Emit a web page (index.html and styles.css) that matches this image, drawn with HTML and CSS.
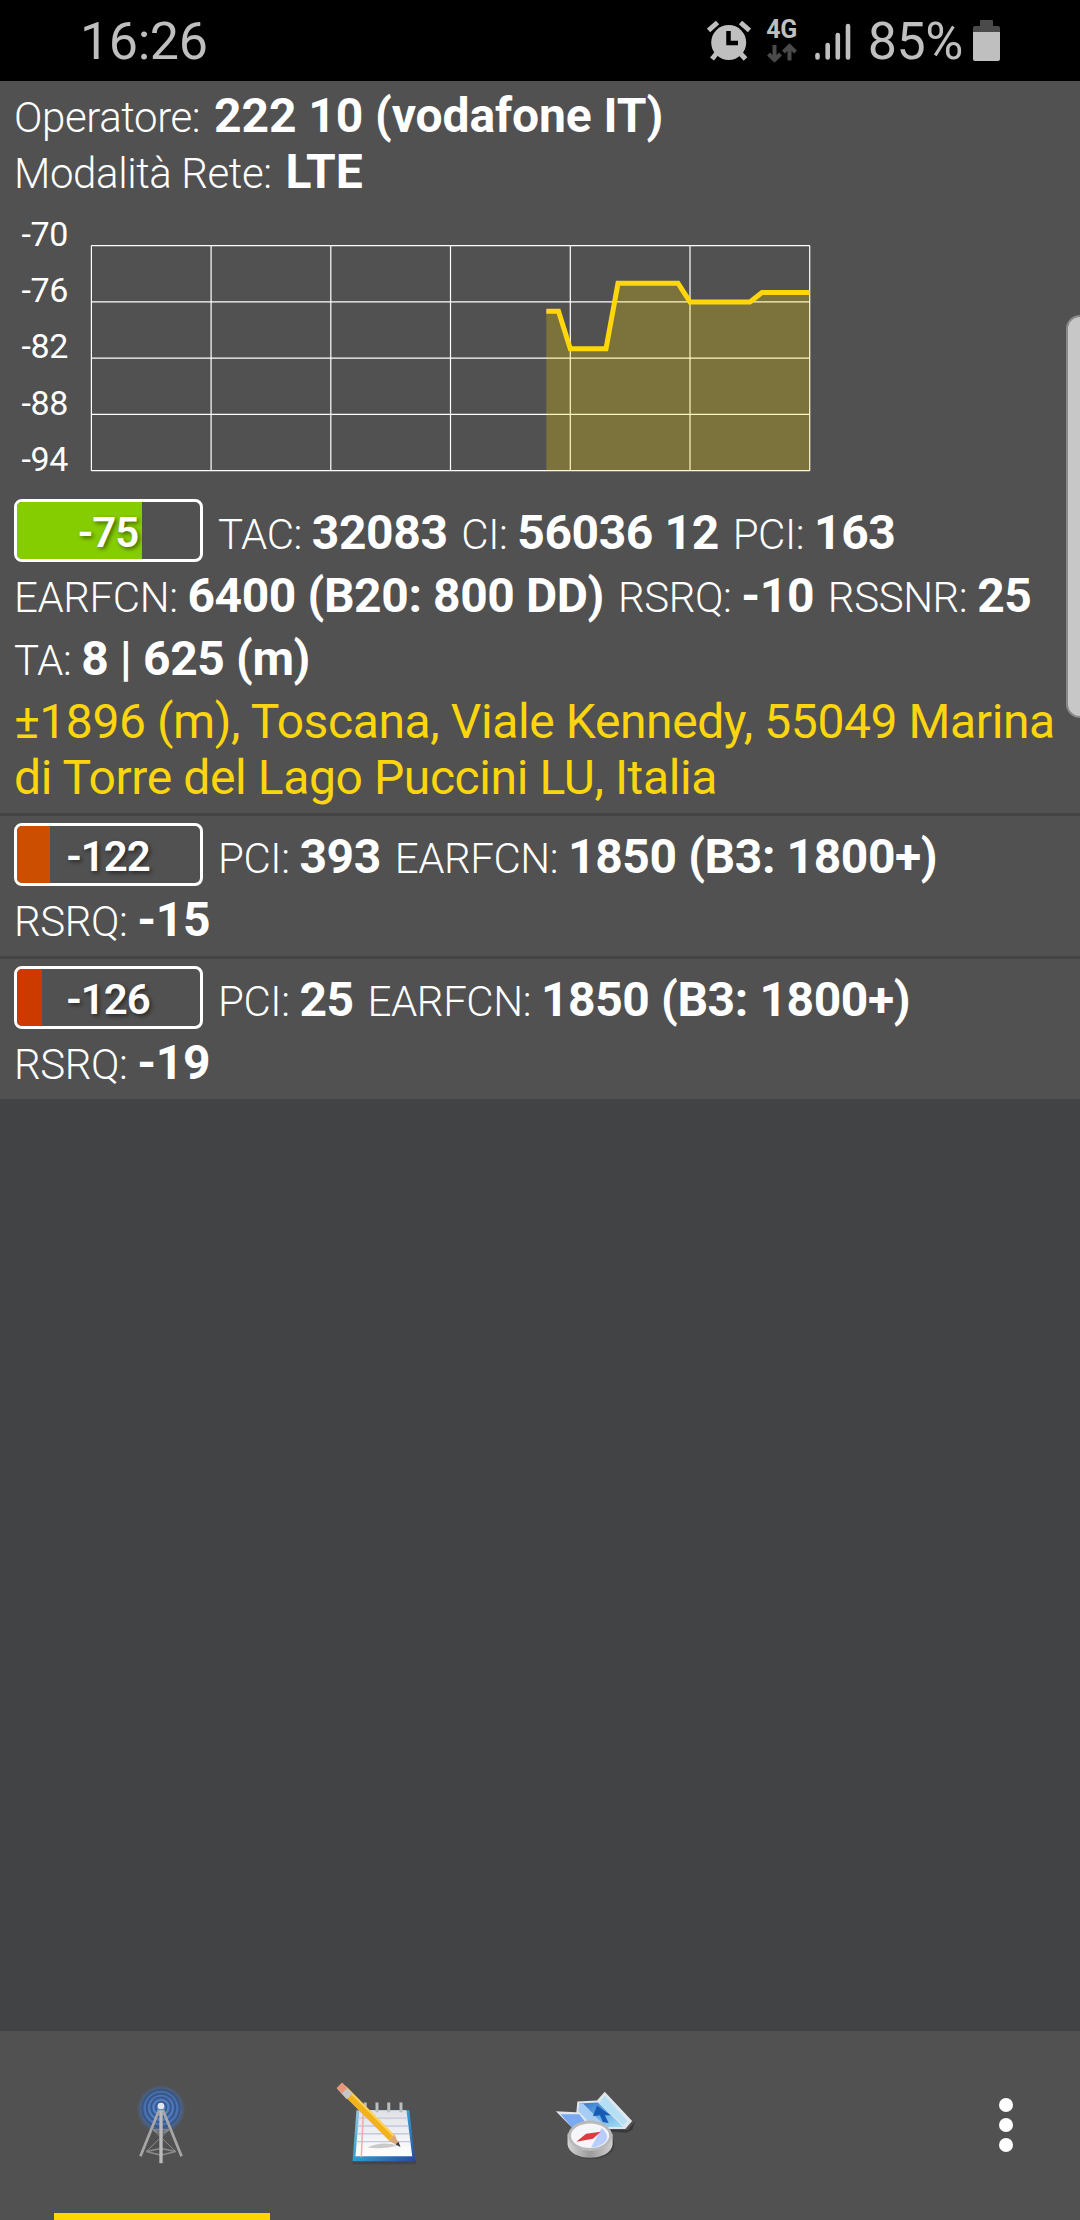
FILE: index.html
```html
<!DOCTYPE html>
<html lang="it">
<head>
  <meta charset="UTF-8">
  <meta name="viewport" content="width=device-width, initial-scale=1.0">
  <title>Informazioni Cella</title>
  <link rel="stylesheet" href="styles.css">
</head>
<body>
  <div class="status-bar">
    <span class="clock">16:26</span>
    <div class="status-icons">
      <svg class="alarm" width="44" height="42" viewBox="0 0 44 42">
        <g stroke="#bfbfbf" stroke-width="5">
          <path d="M1.500 10.500 L10.500 2.500 M33.500 2.500 L42.500 10.500"/>
          <path d="M10 33 L5 39 M33 33 L38.500 39"/>
        </g>
        <circle cx="21.700" cy="22.500" r="17.500" fill="#bfbfbf"/>
        <path d="M21.500 11 V23 H31" fill="none" stroke="#000" stroke-width="4.500"/>
      </svg>
      <div class="network">
        <span>4G</span>
        <svg width="30" height="20" viewBox="0 0 30 20">
          <path d="M7.500 2 V17 M1.500 11 L7.500 17 L13.500 11 M22.500 17.500 V3 M16.500 9 L22.500 3 L28.500 9" fill="none" stroke="#4a4a4a" stroke-width="4"/>
        </svg>
      </div>
      <svg class="bars" width="36" height="39" viewBox="0 0 36 39">
        <path d="M2.500 33 V35.500 M12.700 23 V35.500 M22.800 13 V35.500 M33 4 V35.500" stroke="#bfbfbf" stroke-width="4.600" stroke-linecap="round"/>
      </svg>
      <span class="percent">85%</span>
      <svg class="battery" width="27" height="41" viewBox="0 0 27 41">
        <path d="M0 12 V8 Q0 6 2 6 H7 V1 Q7 0 8 0 H19 Q20 0 20 1 V6 H25 Q27 6 27 8 V12 Z" fill="#4a4a4a"/>
        <path d="M0 12 H27 V39 Q27 41 25 41 H2 Q0 41 0 39 Z" fill="#bfbfbf"/>
      </svg>
    </div>
  </div>

  <div class="cell main-cell">
    <div class="info">Operatore: <b>222 10 (vodafone IT)</b></div>
    <div class="info">Modalità Rete: <b>LTE</b></div>

    <div class="chart">
      <div class="chart-labels">
        <span>-70</span>
        <span>-76</span>
        <span>-82</span>
        <span>-88</span>
        <span>-94</span>
      </div>
      <svg class="plot" width="722" height="229" viewBox="90 244 722 229">
        <path class="grid" d="M91.400 245.600 H809.700 M91.400 301.900 H809.700 M91.400 358.200 H809.700 M91.400 414.400 H809.700 M91.400 470.700 H809.700 M91.400 245.600 V470.700 M211.100 245.600 V470.700 M330.800 245.600 V470.700 M450.500 245.600 V470.700 M570.300 245.600 V470.700 M690 245.600 V470.700 M809.700 245.600 V470.700"/>
        <path class="area" d="M546.300 311.300 H558.500 L570.300 348.800 H606 L618 283.200 H678 L690 301.900 H750 L762 292.500 H809.700 V470.700 H546.300 Z"/>
        <path class="line" d="M546.300 311.300 H558.500 L570.300 348.800 H606 L618 283.200 H678 L690 301.900 H750 L762 292.500 H809.700"/>
      </svg>
    </div>

    <div class="row">
      <div class="gauge good"><div class="fill"></div><span>-75</span></div>TAC: <b>32083</b> CI: <b>56036 12</b> PCI: <b>163</b>
    </div>
    <div class="row">EARFCN: <b>6400 (B20: 800 DD)</b> RSRQ: <b>-10</b> RSSNR: <b>25</b></div>
    <div class="row">TA: <b>8 | 625 (m)</b></div>
    <p class="address">±1896 (m), Toscana, Viale Kennedy, 55049 Marina di Torre del Lago Puccini LU, Italia</p>
  </div>

  <div class="cell">
    <div class="row">
      <div class="gauge low"><div class="fill"></div><span>-122</span></div>PCI: <b>393</b> EARFCN: <b>1850 (B3: 1800+)</b>
    </div>
    <div class="row">RSRQ: <b>-15</b></div>
  </div>

  <div class="cell">
    <div class="row">
      <div class="gauge lowest"><div class="fill"></div><span>-126</span></div>PCI: <b>25</b> EARFCN: <b>1850 (B3: 1800+)</b>
    </div>
    <div class="row">RSRQ: <b>-19</b></div>
  </div>

  <div class="scroll-thumb"></div>

  <div class="tabs">
    <div class="tab active">
      <!-- antenna -->
      <svg width="94" height="94" viewBox="0 0 96 96">
        <defs>
          <radialGradient id="waves">
            <stop offset="0" stop-color="#5b8fe0"/>
            <stop offset="0.7" stop-color="#4674bd" stop-opacity="0.85"/>
            <stop offset="1" stop-color="#4674bd" stop-opacity="0"/>
          </radialGradient>
        </defs>
        <circle cx="48" cy="33" r="25" fill="url(#waves)"/>
        <g fill="none" stroke="#35527f" stroke-width="2" opacity="0.850">
          <circle cx="48" cy="31" r="5.500"/>
          <circle cx="48" cy="31" r="10"/>
          <circle cx="48" cy="31.500" r="14.500"/>
          <circle cx="48" cy="32" r="19"/>
        </g>
        <g fill="none" stroke="#8c8c8c" stroke-width="1.500">
          <path d="M40 54 L48 58 L56 54 Z M33 76 L48 80 L63 76 L48 73 Z"/>
          <path d="M40 54 L63 76 M56 54 L33 76" stroke-width="1"/>
        </g>
        <path d="M46 34 L27 81 M50 34 L69 81" stroke="#a6a6a6" stroke-width="2.800"/>
        <path d="M48 34 V88" stroke="#bababa" stroke-width="3.400"/>
        <circle cx="48" cy="29.500" r="3.300" fill="#e6e6e6"/>
      </svg>
    </div>
    <div class="tab">
      <!-- notepad -->
      <svg width="94" height="94" viewBox="0 0 96 96">
        <defs>
          <linearGradient id="edge" x1="0" y1="0" x2="1" y2="1">
            <stop offset="0" stop-color="#9cc9e0"/>
            <stop offset="0.500" stop-color="#2f9bcc"/>
            <stop offset="1" stop-color="#2747a3"/>
          </linearGradient>
          <linearGradient id="paper" x1="0" y1="0" x2="0" y2="1">
            <stop offset="0" stop-color="#dfe1e6"/>
            <stop offset="1" stop-color="#ffffff"/>
          </linearGradient>
        </defs>
        <path d="M23 87 H88" stroke="#3d3f47" stroke-width="4" opacity="0.600"/>
        <path d="M27 34 H81 L87 86 H23 Z" fill="url(#edge)"/>
        <path d="M30 34 H78 L84 81 H26 Z" fill="url(#paper)"/>
        <path d="M29 42 H79 M28 50 H80 M28 58 H81 M27 66 H82" stroke="#c3c8dc" stroke-width="1.500"/>
        <path d="M34 36 L32 82" stroke="#efaaaa" stroke-width="1.500"/>
        <path d="M36 26 V36 M48 26 V36 M60 26 V36 M72.500 26 V36" stroke="#b9bfc0" stroke-width="3"/>
        <path d="M38 72 Q54 65 69 70 Q56 74 38 72 Z" fill="#b5b5b5" opacity="0.700"/>
        <path d="M14 13 L63 62" stroke="#f2b21c" stroke-width="8"/>
        <path d="M15.500 10 L65 60" stroke="#ffd35a" stroke-width="2"/>
        <path d="M10.500 9.500 L20 20" stroke="#c6c4c8" stroke-width="8"/>
        <path d="M9.500 8.500 L15 14" stroke="#e8987a" stroke-width="8"/>
        <path d="M60 65 L66 59 L71.500 71 Z" fill="#dca777"/>
        <path d="M67 69 L70 66 L72 71.500 Z" fill="#3c3c3c"/>
      </svg>
    </div>
    <div class="tab">
      <!-- map and compass -->
      <svg width="94" height="94" viewBox="0 0 96 96">
        <defs>
          <linearGradient id="map" x1="0" y1="0" x2="1" y2="1">
            <stop offset="0" stop-color="#2f74cc"/>
            <stop offset="1" stop-color="#a5e0f5"/>
          </linearGradient>
          <linearGradient id="metal" x1="0" y1="0" x2="1" y2="0">
            <stop offset="0" stop-color="#d5d5d5"/>
            <stop offset="0.500" stop-color="#9a9a9a"/>
            <stop offset="1" stop-color="#d0d0d0"/>
          </linearGradient>
        </defs>
        <path d="M36 53 L84 54 L91 45 L88 54 L82 57 Z" fill="#383838"/>
        <path d="M10 35 L31 36 L32 25 L52 24 L60 15 L88 45 L81 53 H28 Z" fill="#dfe6ed"/>
        <path d="M15 38 L34 38 L44 51 H26 Z" fill="#79a9f2"/>
        <path d="M34 27 L53 26 L79 51 L57 51 Z" fill="url(#map)"/>
        <path d="M34 27 L38 27 L61 51 H49 L33 35 Z" fill="#a7cdf5"/>
        <path d="M60 19 L83 45 L79 49 L54 27 Z" fill="#b5dff4"/>
        <path d="M52 29 L66 39 L60 39 L64 47 L58 46 L55 39 L48 40 Z" fill="#185bb5"/>
        <ellipse cx="47" cy="69" rx="23" ry="15" fill="#353535" opacity="0.500"/>
        <path d="M22 58 V69 C24 87 66 87 68 69 V58 Z" fill="url(#metal)"/>
        <ellipse cx="45" cy="60" rx="22.500" ry="15.500" fill="#b9b9b9"/>
        <ellipse cx="45" cy="60" rx="19.500" ry="12.500" fill="#f5f5fa"/>
        <path d="M46 72 L57 52 Q68 62 57 69 Q52 72 46 72 Z" fill="#b9cdfc"/>
        <path d="M31 66 L41 58 L56 56 L48 63 Z" fill="#dc3b40"/>
      </svg>
    </div>
    <div class="menu">
      <span></span>
      <span></span>
      <span></span>
    </div>
  </div>
</body>
</html>
```
FILE: styles.css
```css
* {
  box-sizing: border-box;
}
body {
  margin: 0;
  height: 2220px;
  display: flex;
  flex-direction: column;
  background: #424345;
  color: #fff;
  font-family: Roboto, sans-serif;
  font-weight: 300;
  font-size: 42px;
  letter-spacing: -0.4px;
  overflow: hidden;
}
b {
  font-size: 48px;
  font-weight: 700;
}

/* Status bar */
.status-bar {
  height: 81px;
  padding: 0 80px 0 80px;
  background: #000;
  color: #bfbfbf;
  display: flex;
  justify-content: space-between;
  font-size: 52px;
  font-weight: 400;
  line-height: 84px;
}
.status-icons {
  display: flex;
  align-items: flex-start;
}
.alarm {
  margin-top: 20px;
}
.network {
  width: 34px;
  margin: 17px 0 0 14px;
  display: flex;
  flex-direction: column;
  align-items: center;
  font-size: 25px;
  font-weight: 700;
  line-height: 26px;
}
.bars {
  margin: 22px 17px 0 16px;
}
.battery {
  margin: 20px 0 0 10px;
}

/* Cells */
.cell {
  height: 143px;
  padding: 9px 0 0 14px;
  background: #515151;
  border-bottom: 3px solid #434446;
}
.main-cell {
  height: 735px;
  padding-top: 7px;
}
.info {
  height: 56px;
  line-height: 56px;
  white-space: nowrap;
}
.info b {
  margin-left: 4px;
  letter-spacing: -0.1px;
}
.row {
  height: 63px;
  line-height: 63px;
  white-space: nowrap;
}
.row b {
  margin-right: 4px;
}

/* Signal chart */
.chart {
  display: flex;
  height: 296px;
  margin-top: 5px;
}
.chart-labels {
  width: 54px;
  padding-top: 1px;
  margin-right: 22px;
  display: flex;
  flex-direction: column;
  text-align: right;
  font-size: 34px;
  font-weight: 400;
}
.chart-labels span {
  height: 56.2px;
  line-height: 56px;
}
.plot {
  margin-top: 39px;
}
.grid {
  fill: none;
  stroke: #fff;
  stroke-width: 1.2;
}
.area {
  fill: #ffd700;
  opacity: 0.25;
}
.line {
  fill: none;
  stroke: #ffd70a;
  stroke-width: 5;
}

.gauge {
  display: inline-flex;
  vertical-align: top;
  position: relative;
  width: 189px;
  height: 63px;
  margin: -2px 15px 0 0;
  border: 3px solid #fff;
  border-radius: 8px;
  overflow: hidden;
}
.gauge span {
  position: absolute;
  left: 0;
  width: 182px;
  text-align: center;
  font-weight: 600;
  letter-spacing: -1px;
  line-height: 61px;
  text-shadow: 2px 2px 4px rgba(0, 0, 0, 0.5);
}
.fill {
  height: 100%;
}
.good .fill {
  width: 125px;
  background: #86cd00;
}
.low .fill {
  width: 33px;
  background: #cc4e00;
}
.lowest .fill {
  width: 25px;
  background: #cc3a00;
}
.address {
  margin: 4px 0 0;
  color: #fbd60f;
  font-size: 48px;
  font-weight: 400;
  letter-spacing: -0.4px;
  line-height: 56px;
}

/* Overlay scrollbar */
.scroll-thumb {
  position: absolute;
  top: 315px;
  right: 0;
  width: 14px;
  height: 403px;
  background: #c7c7c7;
  border: 2px solid #898989;
  border-right: none;
  border-radius: 14px 0 0 14px;
}

/* Bottom tabs */
.tabs {
  height: 189px;
  margin-top: auto;
  padding-left: 54px;
  display: flex;
  background: #515151;
}
.tab {
  width: 216px;
  padding: 46px 3px 0 0;
  text-align: center;
}
.tab svg {
  filter: blur(0.6px);
}
.tab.active {
  border-bottom: 7px solid #ffd700;
}
.menu {
  margin: 67px 67px 0 auto;
  display: flex;
  flex-direction: column;
  gap: 6px;
}
.menu span {
  width: 14px;
  height: 14px;
  border-radius: 50%;
  background: #fff;
}
```
